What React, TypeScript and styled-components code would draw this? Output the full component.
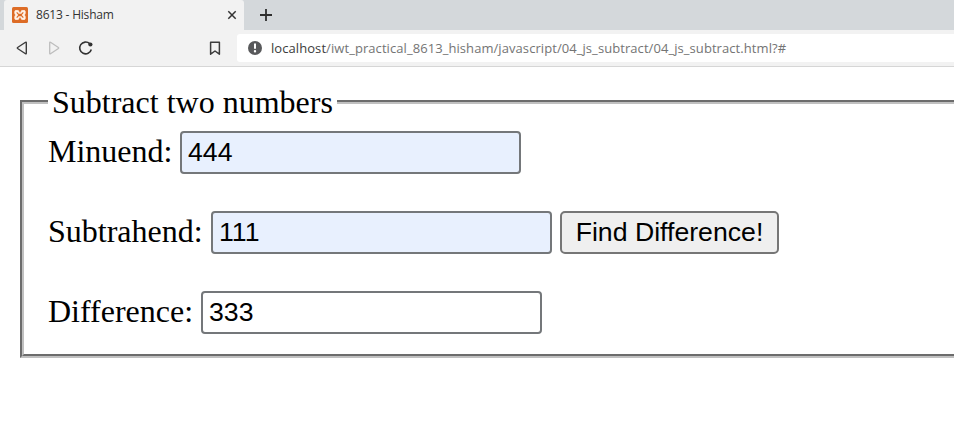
import React from 'react';
import styled, { createGlobalStyle } from 'styled-components';

const GlobalStyle = createGlobalStyle`
  * { box-sizing: border-box; }
  html, body { margin: 0; padding: 0; background: #fff; overflow: hidden; }
`;

const Window = styled.div`
  width: 100%;
  height: 433px;
  overflow: hidden;
  background: #fff;
`;

const TabStrip = styled.div`
  display: flex;
  height: 30px;
  padding-left: 4px;
  background: #d4d8db;
`;

const Tab = styled.div`
  display: flex;
  align-items: center;
  width: 240px;
  padding: 0 7px 0 8px;
  background: #f2f2f2;
  border-radius: 3px 3px 0 0;
`;

const TabTitle = styled.span`
  flex: 1;
  margin-left: 8px;
  font: 12px/16px 'Open Sans', sans-serif;
  letter-spacing: -0.2px;
  color: #333;
  white-space: nowrap;
`;

const NewTab = styled.div`
  display: flex;
  align-items: center;
  margin-left: 15px;
`;

const Toolbar = styled.div`
  display: flex;
  align-items: center;
  height: 37px;
  padding-left: 13px;
  background: #f2f2f2;
  border-bottom: 1px solid #d6d6d6;
`;

const ToolIcon = styled.div<{ $gap: number }>`
  display: flex;
  width: 20px;
  height: 20px;
  margin-right: ${(p) => p.$gap}px;
`;

const AddressBar = styled.div`
  display: flex;
  align-items: center;
  flex: 1;
  height: 28px;
  padding-left: 10px;
  background: #fff;
  border-radius: 3px 0 0 3px;
`;

const Address = styled.span`
  margin-left: 8px;
  font: 13px/18px 'Open Sans', sans-serif;
  letter-spacing: 0.07px;
  color: #747474;
  white-space: nowrap;
`;

const Host = styled.span`
  color: #3c3c3c;
`;

const Page = styled.main`
  width: 980px;
  padding: 17px 0 0 20px;
  font: 32px/36px 'Liberation Serif', 'Times New Roman', serif;
  color: #000;
`;

const Fieldset = styled.fieldset`
  height: 274px;
  margin: 0;
  min-width: 0;
  padding: 11px 24px 0;
  border: 4px groove #c0c0c0;
`;

const Legend = styled.legend`
  height: 36px;
  padding: 0 4px;
`;

const Row = styled.div`
  display: flex;
  align-items: flex-start;
  height: 80px;
`;

const Label = styled.label<{ $width: number }>`
  width: ${(p) => p.$width}px;
  padding-top: 2px;
  white-space: nowrap;
`;

const Input = styled.input<{ $filled?: boolean }>`
  width: 341px;
  height: 43px;
  margin: 0;
  padding: 0 6px;
  border: 2px solid #74777a;
  border-radius: 4px;
  outline: none;
  background: ${(p) => (p.$filled ? '#e8f0fe' : '#fff')};
  color: #000;
  font: 26.667px 'Liberation Sans', Arial, sans-serif;
`;

const Button = styled.button`
  width: 219px;
  height: 43px;
  margin: 0 0 0 8px;
  padding: 0;
  border: 2px solid #767676;
  border-radius: 5px;
  background: #efefef;
  color: #000;
  font: 26.667px 'Liberation Sans', Arial, sans-serif;
  white-space: nowrap;
`;

const XamppIcon = () => (
  <svg width="16" height="16" viewBox="0 0 16 16">
    <rect width="16" height="16" rx="1.5" fill="#dd6c26" />
    <path
      d="M3.600 3.500H5.800Q6.900 3.500 6.900 4.800V5.800H9.100V4.800Q9.100 3.500 10.200 3.500H12.400Q13.200 3.500 13.200 4.500V6.200Q13.200 7.200 12.200 8Q13.200 8.800 13.200 9.800V11.500Q13.200 12.500 12.400 12.500H10.200Q9.100 12.500 9.100 11.200V10.200H6.900V11.200Q6.900 12.500 5.800 12.500H3.600Q2.800 12.500 2.800 11.500V9.800Q2.800 8.800 3.800 8Q2.800 7.200 2.800 6.200V4.500Q2.800 3.500 3.600 3.500Z"
      fill="#fff3e8"
      stroke="#fff3e8"
      strokeWidth="0.8"
      strokeLinejoin="round"
    />
    <path d="M4.700 5.300L6.500 7.300H9.500L11.300 5.300M4.700 10.700L6.500 8.700H9.500L11.300 10.700M6.600 8H9.400" fill="none" stroke="#dd6c26" strokeWidth="1.200" />
  </svg>
);

const CloseIcon = () => (
  <svg width="10" height="10" viewBox="0 0 10 10">
    <path d="M1.300 1.300l7.400 7.400M8.700 1.300L1.300 8.700" stroke="#333" strokeWidth="1.5" />
  </svg>
);

const PlusIcon = () => (
  <svg width="14" height="14" viewBox="0 0 14 14">
    <path d="M1 7h12M7 1v12" stroke="#2e2e2e" strokeWidth="1.8" />
  </svg>
);

const BackIcon = () => (
  <svg width="20" height="20" viewBox="0 0 20 20">
    <path d="M13.300 4.700v10.600c0 .5-.4.7-.8.400L4.600 10.500c-.4-.3-.4-.7 0-1l7.900-5.200c.4-.3.800-.1.800.4z" fill="none" stroke="#3c3c3c" strokeWidth="1.400" />
  </svg>
);

const ForwardIcon = () => (
  <svg width="20" height="20" viewBox="0 0 20 20">
    <path d="M4.700 4.700v10.600c0 .5.4.7.8.400l7.900-5.200c.4-.3.400-.7 0-1L5.500 4.300c-.4-.3-.8-.1-.8.400z" fill="none" stroke="#bdbdbd" strokeWidth="1.300" />
  </svg>
);

const ReloadIcon = () => (
  <svg width="20" height="20" viewBox="0 0 20 20">
    <path d="M15.300 11.500A5.900 5.900 0 1 1 13.700 5.700" fill="none" stroke="#333" strokeWidth="1.600" />
    <circle cx="14.400" cy="6.500" r="2.100" fill="#333" />
  </svg>
);

const BookmarkIcon = () => (
  <svg width="20" height="20" viewBox="0 0 20 20">
    <path d="M5.600 4.200h8.800v12L10 13l-4.400 3.200z" fill="none" stroke="#3c3c3c" strokeWidth="1.500" strokeLinejoin="round" />
  </svg>
);

const InfoIcon = () => (
  <svg width="16" height="16" viewBox="0 0 16 16">
    <circle cx="8" cy="8" r="7" fill="#58595b" />
    <path d="M8 3.500v5.200" stroke="#fff" strokeWidth="2" />
    <circle cx="8" cy="11.300" r="1.200" fill="#fff" />
  </svg>
);

export default function App() {
  return (
    <Window>
      <GlobalStyle />
      <TabStrip>
        <Tab>
          <XamppIcon />
          <TabTitle>8613 - Hisham</TabTitle>
          <CloseIcon />
        </Tab>
        <NewTab><PlusIcon /></NewTab>
      </TabStrip>
      <Toolbar>
        <ToolIcon $gap={12}><BackIcon /></ToolIcon>
        <ToolIcon $gap={11}><ForwardIcon /></ToolIcon>
        <ToolIcon $gap={109}><ReloadIcon /></ToolIcon>
        <ToolIcon $gap={12}><BookmarkIcon /></ToolIcon>
        <AddressBar>
          <InfoIcon />
          <Address>
            <Host>localhost</Host>/iwt_practical_8613_hisham/javascript/04_js_subtract/04_js_subtract.html?#
          </Address>
        </AddressBar>
      </Toolbar>
      <Page>
        <Fieldset>
          <Legend>Subtract two numbers</Legend>
          <Row>
            <Label $width={132} htmlFor="minuend">Minuend:</Label>
            <Input id="minuend" $filled defaultValue="444" />
          </Row>
          <Row>
            <Label $width={163} htmlFor="subtrahend">Subtrahend:</Label>
            <Input id="subtrahend" $filled defaultValue="111" />
            <Button type="button">Find Difference!</Button>
          </Row>
          <Row>
            <Label $width={153} htmlFor="difference">Difference:</Label>
            <Input id="difference" defaultValue="333" />
          </Row>
        </Fieldset>
      </Page>
    </Window>
  );
}
